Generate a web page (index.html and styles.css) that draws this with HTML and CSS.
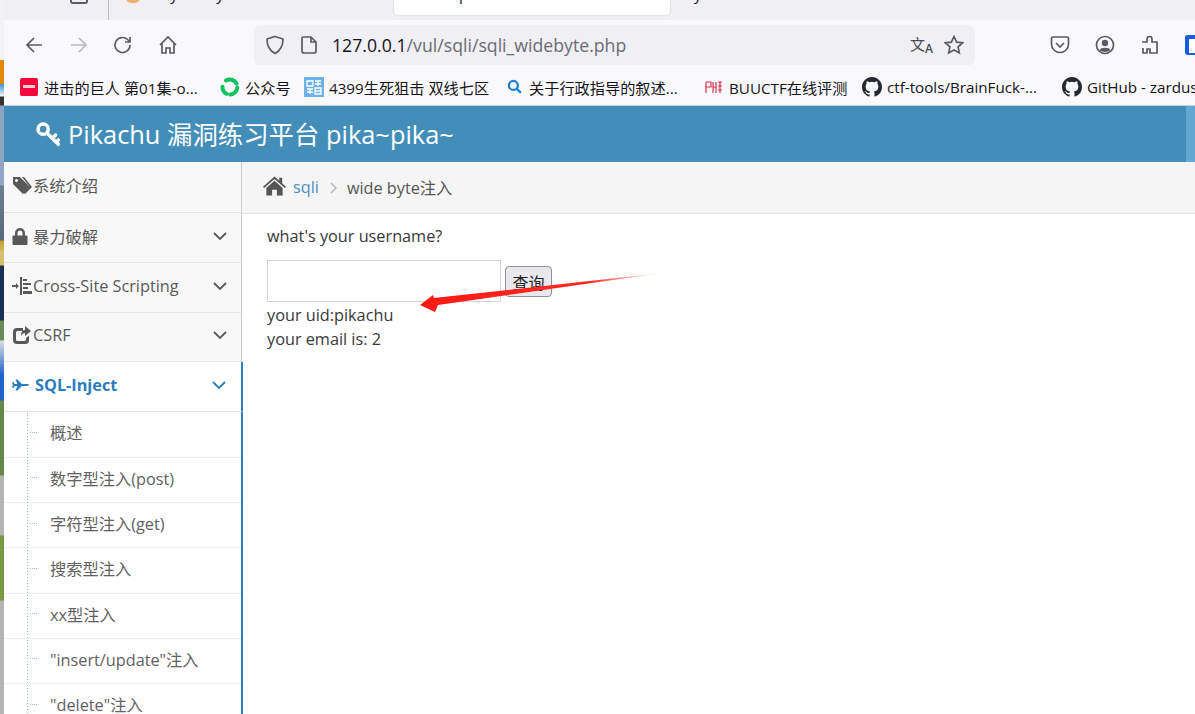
FILE: index.html
```html
<!DOCTYPE html>
<html>
<head>
<meta charset="utf-8">
<title>Pikachu</title>
<link rel="stylesheet" href="styles.css">
</head>
<body>
<div class="wallpaper"></div>
<div class="browser">

  <!--tab strip, cut by the top of the screen-->
  <div class="tabs">
    <span class="tabBox"></span>
    <span class="tabSep"></span>
    <span class="favicon"></span>
    <span class="tabLabel">Play Today</span>
    <div class="tabActive"><span class="tabLabel">Setup</span></div>
    <span class="tabLabel tabLast">y</span>
  </div>

  <div class="nav">
    <svg class="navIcon" viewBox="0 0 20 20"><path d="M18 10H3M10 3l-7 7 7 7"/></svg>
    <svg class="navIcon off" viewBox="0 0 20 20"><path d="M2 10h15M10 3l7 7-7 7"/></svg>
    <svg class="navIcon" viewBox="0 0 20 20"><path d="M17 10a7.500 7.500 0 1 1-2.400-5.500L17 7M17 2v5h-5"/></svg>
    <svg class="navIcon" viewBox="0 0 20 20"><path d="M2 10l8-8 8 8M4 8.500V18h4v-5h4v5h4V8.500"/></svg>
    <div class="urlbar">
      <svg class="urlIcon" viewBox="0 0 20 20"><path d="M10 1.500l8 2.500c0 7-2 11.500-8 14.500C4 15.500 2 11 2 4z"/></svg>
      <svg class="urlIcon" viewBox="0 0 20 20"><path d="M4 2h8l5 5v9a2 2 0 0 1-2 2H5a2 2 0 0 1-2-2V3a1 1 0 0 1 1-1zM12 2v5h5"/></svg>
      <div class="url">127.0.0.1<span class="urlPath">/vul/sqli/sqli_widebyte.php</span></div>
      <span class="translate">文<b>A</b></span>
      <svg class="urlIcon star" viewBox="0 0 20 20"><path d="M10 1.500l2.600 5.600 6 .7-4.500 4.100 1.200 6L10 15l-5.300 2.900 1.200-6L1.400 7.800l6-.7z"/></svg>
    </div>
    <div class="navRight">
      <svg class="navIcon" viewBox="0 0 20 20"><path d="M3 2h14a1.500 1.500 0 0 1 1.500 1.500V9a8.500 8.500 0 0 1-17 0V3.500A1.500 1.500 0 0 1 3 2zM6 8l4 4 4-4"/></svg>
      <svg class="navIcon" viewBox="0 0 20 20"><circle cx="10" cy="10" r="8.500"/><circle class="fill" cx="10" cy="8" r="3.200"/><path class="fill" d="M4.500 15c1-3 10-3 11 0-2 2.500-9 2.500-11 0z"/></svg>
      <svg class="navIcon" viewBox="0 0 20 20"><path d="M2 7h5V4a2.500 2.500 0 0 1 5 0v3h5v11h-7v-4H7v4H3v-5"/></svg>
      <span class="bitwarden"></span>
    </div>
  </div>

  <div class="bookmarks">
    <div class="bm"><span class="bmRed"></span>进击的巨人 第01集-o...</div>
    <div class="bm"><svg class="bmIcon" viewBox="0 0 20 20"><path class="bmGreen" d="M6 3.500a7.500 7.500 0 0 1 10.500 3M17.300 10.500a7.500 7.500 0 0 1-7 7M6.500 16.800a7.500 7.500 0 0 1-4-7"/></svg>公众号</div>
    <div class="bm"><svg class="bmIcon blueBox" viewBox="0 0 20 20"><path d="M3 4h6v5H3zM11 4h6M14 4v5M11 7h6M3 12h6M6 12v5M3 15h6M11 11h6v6h-6zM11 14h6"/></svg>4399生死狙击 双线七区</div>
    <div class="bm"><svg class="bmIcon small" viewBox="0 0 20 20"><circle class="bmBlue" cx="8.500" cy="8.500" r="6"/><path class="bmBlue" d="M13 13l5.500 5.500"/></svg>关于行政指导的叙述...</div>
    <div class="bm"><svg class="bmIcon buu" viewBox="0 0 18 18"><path d="M1 4v11M1 4h5v5H1M8 4v11M11 4v11M8 9h3M13 4h4M13 8h4M15 4v11M13 12h4"/></svg>BUUCTF在线评测</div>
    <div class="bm"><svg class="bmIcon git" viewBox="0 0 16 16"><path d="M8 0C3.580 0 0 3.580 0 8c0 3.540 2.290 6.530 5.470 7.590.4.070.55-.17.55-.38v-1.340c-2.230.48-2.700-1.070-2.700-1.070-.36-.93-.89-1.170-.89-1.170-.73-.5.050-.49.050-.49.800.060 1.220.820 1.220.820.710 1.220 1.870.870 2.330.660.070-.520.280-.870.510-1.070-1.780-.2-3.640-.890-3.640-3.950 0-.870.310-1.590.820-2.150-.080-.2-.360-1.020.080-2.120 0 0 .670-.210 2.200.820a7.600 7.600 0 0 1 4 0c1.530-1.040 2.200-.820 2.200-.820.440 1.100.160 1.920.080 2.120.510.560.820 1.270.820 2.150 0 3.070-1.870 3.750-3.650 3.950.290.250.540.730.540 1.480v2.200c0 .210.150.460.550.380A8 8 0 0 0 16 8c0-4.420-3.580-8-8-8z"/></svg>ctf-tools/BrainFuck-...</div>
    <div class="bm"><svg class="bmIcon git" viewBox="0 0 16 16"><path d="M8 0C3.580 0 0 3.580 0 8c0 3.540 2.290 6.530 5.470 7.590.4.070.55-.17.55-.38v-1.340c-2.230.48-2.700-1.070-2.700-1.070-.36-.93-.89-1.170-.89-1.170-.73-.5.050-.49.050-.49.800.060 1.220.820 1.220.820.710 1.220 1.870.870 2.330.660.070-.520.280-.870.510-1.070-1.780-.2-3.640-.890-3.640-3.950 0-.870.310-1.590.820-2.150-.080-.2-.360-1.020.080-2.120 0 0 .670-.210 2.200.820a7.600 7.600 0 0 1 4 0c1.530-1.040 2.200-.820 2.200-.820.440 1.100.160 1.920.080 2.120.510.560.820 1.270.820 2.150 0 3.070-1.870 3.750-3.650 3.950.290.250.540.730.540 1.480v2.200c0 .210.150.460.550.380A8 8 0 0 0 16 8c0-4.420-3.580-8-8-8z"/></svg>GitHub - zardus</div>
  </div>

  <div class="header">
    <svg class="keyIcon" viewBox="0 0 24 24"><circle cx="7.500" cy="7.500" r="4.700"/><path d="M11 11l10.500 10.500M16 16l3-3M19.500 19.500l2-2"/></svg>
    <span class="brand">Pikachu 漏洞练习平台 pika~pika~</span>
    <span class="headerEnd"></span>
  </div>

  <div class="page">
    <div class="sidebar">
      <div class="item first">
        <svg class="faIcon" viewBox="0 0 20 20"><path d="M1 2h7l10 10-7 7L1 9z M4.500 4a1.500 1.500 0 1 0 .01 0zM10 2h2l8 10-7 7-1-1 6-6z" fill-rule="evenodd"/></svg><span class="itemText">系统介绍</span>
      </div>
      <div class="item">
        <svg class="faIcon" viewBox="0 0 20 20"><path d="M1.500 9.500H3V7a5 5 0 0 1 10 0v2.500h1.500a1 1 0 0 1 1 1V18a1 1 0 0 1-1 1h-13a1 1 0 0 1-1-1v-7.500a1 1 0 0 1 1-1zM5.500 9.500h5V7a2.500 2.500 0 0 0-5 0z" fill-rule="evenodd"/></svg><span class="itemText">暴力破解</span>
        <svg class="chev" viewBox="0 0 14 8"><path d="M1 1l6 6 6-6"/></svg>
      </div>
      <div class="item">
        <svg class="faIcon" viewBox="0 0 20 20"><path d="M0 9h4V7l3 3-3 3v-2H0zM8 1h2v18H8zM11 3h4v2h-4zM11 7h8v2h-8zM11 11h5v2h-5zM11 15h9v3h-9z"/></svg><span class="itemText">Cross-Site Scripting</span>
        <svg class="chev" viewBox="0 0 14 8"><path d="M1 1l6 6 6-6"/></svg>
      </div>
      <div class="item">
        <svg class="faIcon" viewBox="0 0 20 20"><path d="M5 3h6v3H5.500A1.500 1.500 0 0 0 4 7.500v7A1.500 1.500 0 0 0 5.500 16h7a1.500 1.500 0 0 0 1.500-1.500V13l3-2.500V15a4 4 0 0 1-4 4H5a4 4 0 0 1-4-4V7a4 4 0 0 1 4-4zM13 1l6 5-6 5V8c-2 0-3 1-4 3 0-3 1-6 4-6z"/></svg><span class="itemText">CSRF</span>
        <svg class="chev" viewBox="0 0 14 8"><path d="M1 1l6 6 6-6"/></svg>
      </div>
      <div class="item active">
        <svg class="faIcon" viewBox="0 0 20 20"><path d="M0 7h2l1 2h3L4 4h2l5 5h5c4 0 4 2 0 2h-5l-5 5H4l2-5H3l-1 2H0l1-3z"/></svg><span class="itemText">SQL-Inject</span>
        <svg class="chev" viewBox="0 0 14 8"><path d="M1 1l6 6 6-6"/></svg>
      </div>
      <div class="subList">
        <div class="sub">概述</div>
        <div class="sub">数字型注入(post)</div>
        <div class="sub">字符型注入(get)</div>
        <div class="sub">搜索型注入</div>
        <div class="sub">xx型注入</div>
        <div class="sub">"insert/update"注入</div>
        <div class="sub">"delete"注入</div>
      </div>
    </div>

    <div class="main">
      <div class="crumbs">
        <svg class="homeIcon" viewBox="0 0 24 20"><path d="M12 0l5 4.500V1.500h3V7.200l4 3.600-1.200 1.400L12 2.600 1.200 12.200 0 10.800zM12 4.500l8.500 7.500v8H14.500v-6h-5v6H3.500v-8z"/></svg>
        <a class="crumbLink">sqli</a>
        <svg class="crumbSep" viewBox="0 0 7 12"><path d="M1 1l5 5-5 5"/></svg>
        <span>wide byte注入</span>
      </div>
      <div class="content">
        <p class="question">what's your username?</p>
        <div class="form">
          <input class="nameInput" type="text">
          <button class="query">查询</button>
        </div>
        <p class="result">your uid:pikachu</p>
        <p class="result">your email is: 2</p>
      </div>
    </div>
  </div>
</div>

<!--red arrow painted over the screenshot-->
<svg class="arrow" viewBox="0 0 260 50">
  <defs>
    <linearGradient id="fade" x1="0" x2="1" y1="0" y2="0">
      <stop offset="0" stop-color="#ff1a14"/>
      <stop offset=".7" stop-color="#ff2a20"/>
      <stop offset="1" stop-color="#ff2a20" stop-opacity="0"/>
    </linearGradient>
  </defs>
  <path fill="url(#fade)" d="M245 4L17 29 16 26 3 36 18 43 21 36z"/>
</svg>
</body>
</html>
```

FILE: styles.css
```css
* {box-sizing: border-box;}
html, body {height: 100%;}
body {margin: 0; display: flex; overflow: hidden; background: #fff;
  font-family: "Open Sans", "Noto Sans CJK SC", sans-serif; font-size: 16.250px; color: #393939;}

.wallpaper {width: 4px; flex: none;
  background: linear-gradient(#f2f2f5 0, #f2f2f5 60px, #e28a08 60px, #e28a08 84px, #3d8fd8 84px, #f5f5f5 96px,
    #333 97px, #333 105px, #8fa3c0 106px, #93a6c4 185px, #6d7f8e 186px, #5a6a7a 240px, #c29a2c 241px, #d6bf6d 252px,
    #d6bf6d 265px, #1b2f57 266px, #1b2f57 320px, #6b8a5a 321px, #6b8a5a 340px, #d8dde2 341px, #2064c8 375px,
    #2064c8 400px, #68884a 401px, #68884a 475px, #b5b5b5 476px, #b5b5b5 535px, #7a9a40 536px, #7a9a40 600px,
    #b5b5b5 601px);}
.browser {flex: 1; min-width: 0; display: flex; flex-direction: column;}

/* tabs */
.tabs {height: 20px; flex: none; background: #f0f0f4; display: flex; overflow: hidden;
  font-family: "Open Sans", sans-serif; font-size: 15px; color: #15141a;}
.tabBox {width: 18px; height: 4px; margin-left: 66px; border: 2px solid #5b5b66; border-top: 0; border-radius: 0 0 3px 3px; flex: none;}
.tabSep {width: 1px; height: 20px; background: #bdbdc2; margin-left: 20px; flex: none;}
.favicon {width: 14px; height: 5px; margin: -2px 0 0 17px; background: #f0b070; border-radius: 0 0 7px 7px; flex: none;}
.tabLabel {margin: -16px 0 0 9px; line-height: 20px; height: 20px; white-space: nowrap;}
.tabActive {width: 276px; height: 15px; margin-left: 170px; background: #fff; border-radius: 0 0 4px 4px; padding-left: 25px; flex: none;
  box-shadow: 0 0 2px rgba(0,0,0,.2); display: flex;}
.tabLast {margin-left: 24px;}

/* nav bar */
.nav {height: 45px; flex: none; background: #f9f9fb; display: flex; padding: 5px 0 0 20px; align-items: flex-start;}
.navIcon {width: 20px; height: 20px; margin: 10px 24.600px 0 0; fill: none; stroke: #5b5b66; stroke-width: 1.700; flex: none;}
.navIcon.off {stroke: #b8b8bf;}
.navIcon .fill {fill: #5b5b66; stroke: none;}
.urlbar {width: 721px; height: 40px; margin-left: 51.600px; background: #f0f0f4; border-radius: 6px; display: flex; align-items: center; padding: 0 11px; flex: none;}
.urlIcon {width: 20px; height: 20px; fill: none; stroke: #5b5b66; stroke-width: 1.700; flex: none; margin-right: 14px;}
.urlIcon + .urlIcon {margin-right: 13px;}
.url {flex: 1; font-size: 17.700px; color: #15141a; white-space: nowrap;}
.urlPath {color: #6b6b73;}
.translate {font-family: "Noto Sans CJK SC", sans-serif; font-size: 15px; line-height: 18px; color: #4a4a52; width: 26px; margin-right: 8px; white-space: nowrap;}
.translate b {font-family: "Open Sans", sans-serif; font-size: 12px; font-weight: 600; position: relative; top: 3px;}
.urlIcon.star {margin: 0;}
.navRight {display: flex; margin-left: 75px; flex: none;}
.navRight .navIcon {margin-right: 25px;}
.bitwarden {width: 12px; height: 20px; margin-top: 10px; background: #fff; border-radius: 3px 0 0 3px; border: 4px solid #175ddc; border-right: 0; border-bottom-width: 2px; flex: none;}

/* bookmarks */
.bookmarks {height: 41px; flex: none; background: #f9f9fb; display: grid; grid-template-columns: 200px 84px 203px 198px 157px 200px 1fr;
  padding: 3px 0 0 16px; align-items: center; font-size: 15.200px; color: #15141a; white-space: nowrap; overflow: hidden; border-bottom: 1px solid #c9ced2;}
.bm {display: flex; align-items: center; gap: 6px; overflow: hidden;}
.bmIcon {width: 20px; height: 20px; flex: none; fill: none; margin-right: -1px;}
.bmIcon.small {width: 15px; height: 15px; margin-right: 1px;}
.bmIcon.git {fill: #24292f;}
.bmIcon.blueBox {background: #6db1e6; stroke: #fff; stroke-width: 1.300;}
.bmIcon.buu {width: 18px; height: 18px; margin-right: 0; stroke: #d8314a; stroke-width: 1.200;}
.bmGreen {stroke: #14c263; stroke-width: 4; stroke-linecap: round;}
.bmBlue {stroke: #1a7fd0; stroke-width: 3;}
.bmRed {width: 18px; height: 18px; background: #f4073a; border-radius: 2px; flex: none; padding: 7px 3px 0;}
.bmRed::before {content: ""; display: block; height: 3px; background: #fff; opacity: .8;}

/* header */
.header {height: 56px; flex: none; background: #438eb9; display: flex; align-items: center; padding-left: 31px; color: #fff;}
.keyIcon {width: 26px; height: 26px; fill: none; stroke: #fff; stroke-width: 3.200; stroke-linecap: round; flex: none; margin-top: -1px;}
.brand {font-size: 25.400px; margin: -3px 0 0 7px; flex: 1; white-space: nowrap;}
.headerEnd {width: 9px; height: 56px; background: #62a8d1; flex: none;}

/* left menu */
.page {flex: 1; min-height: 0; display: flex;}
.sidebar {width: 238px; flex: none; background: #fff; border-right: 1px solid #cccccc;}
.item {height: 49.800px; display: flex; align-items: center; padding: 0 14px 3px 8px; background: #f8f8f8; border-bottom: 1px solid #e5e5e5; color: #585858; white-space: nowrap;}
.item.first {height: 51px; padding-bottom: 4px;}
.faIcon {width: 20px; height: 20px; fill: #585858; flex: none;}
.itemText {flex: 1; margin-left: 1px;}
.chev {width: 14px; height: 8px; fill: none; stroke: #585858; stroke-width: 1.800; flex: none;}
.active {background: #fff; color: #2b7dbc; font-weight: 700; margin-right: -2px; padding: 0 15px 4px 8px; border-right: 2px solid #2b7dbc; position: relative;}
.active .faIcon {fill: #2b7dbc; width: 18px; margin-right: 4px;}
.active .chev {stroke: #2b7dbc;}
.subList {background: #fff; margin-right: -2px; border-right: 2px solid #2b7dbc; position: relative; height: 320px;
  background-image: linear-gradient(#9dbdd6 50%, transparent 50%); background-size: 1px 3px; background-position: 23px 0; background-repeat: repeat-y;}
.sub {height: 45.330px; padding: 0 0 4px 46px; display: flex; align-items: center; border-bottom: 1px dotted #dfe5ea; color: #616161; white-space: nowrap;}
.sub::before {content: ""; width: 7px; margin-left: -20px; margin-right: 13px; border-top: 1px dotted #9dbdd6; flex: none;}

/* main */
.main {flex: 1; min-width: 0;}
.crumbs {height: 52px; background: #f5f5f5; border-bottom: 1px solid #e5e5e5; display: flex; align-items: center; padding: 0 0 1px 21px; color: #555;}
.homeIcon {width: 23px; height: 20px; fill: #555; flex: none; margin: -2px 7px 0 0;}
.crumbLink {color: #4c8fbd;}
.crumbSep {width: 7px; height: 12px; margin: 2px 10px 0 11px; fill: none; stroke: #b2b6bf; stroke-width: 1.500; flex: none;}
.content {padding: 10px 0 0 25px;}
.question {margin: 0 0 12px; line-height: 24px;}
.form {display: flex; align-items: flex-start; margin-bottom: 1px;}
.nameInput {width: 234px; height: 42px; border: 1px solid #d5d5d5; background: #fff; padding: 0; flex: none;}
.query {width: 47px; height: 31px; margin: 6px 0 0 4px; background: #e9e9ed; border: 1px solid #8f8f9d; border-radius: 4px; font: 16px "Noto Sans CJK SC", sans-serif; color: #222; padding: 0;}
.result {margin: 0; line-height: 24px;}

.arrow {position: absolute; left: 417px; top: 269px; width: 260px; height: 50px;}
```
